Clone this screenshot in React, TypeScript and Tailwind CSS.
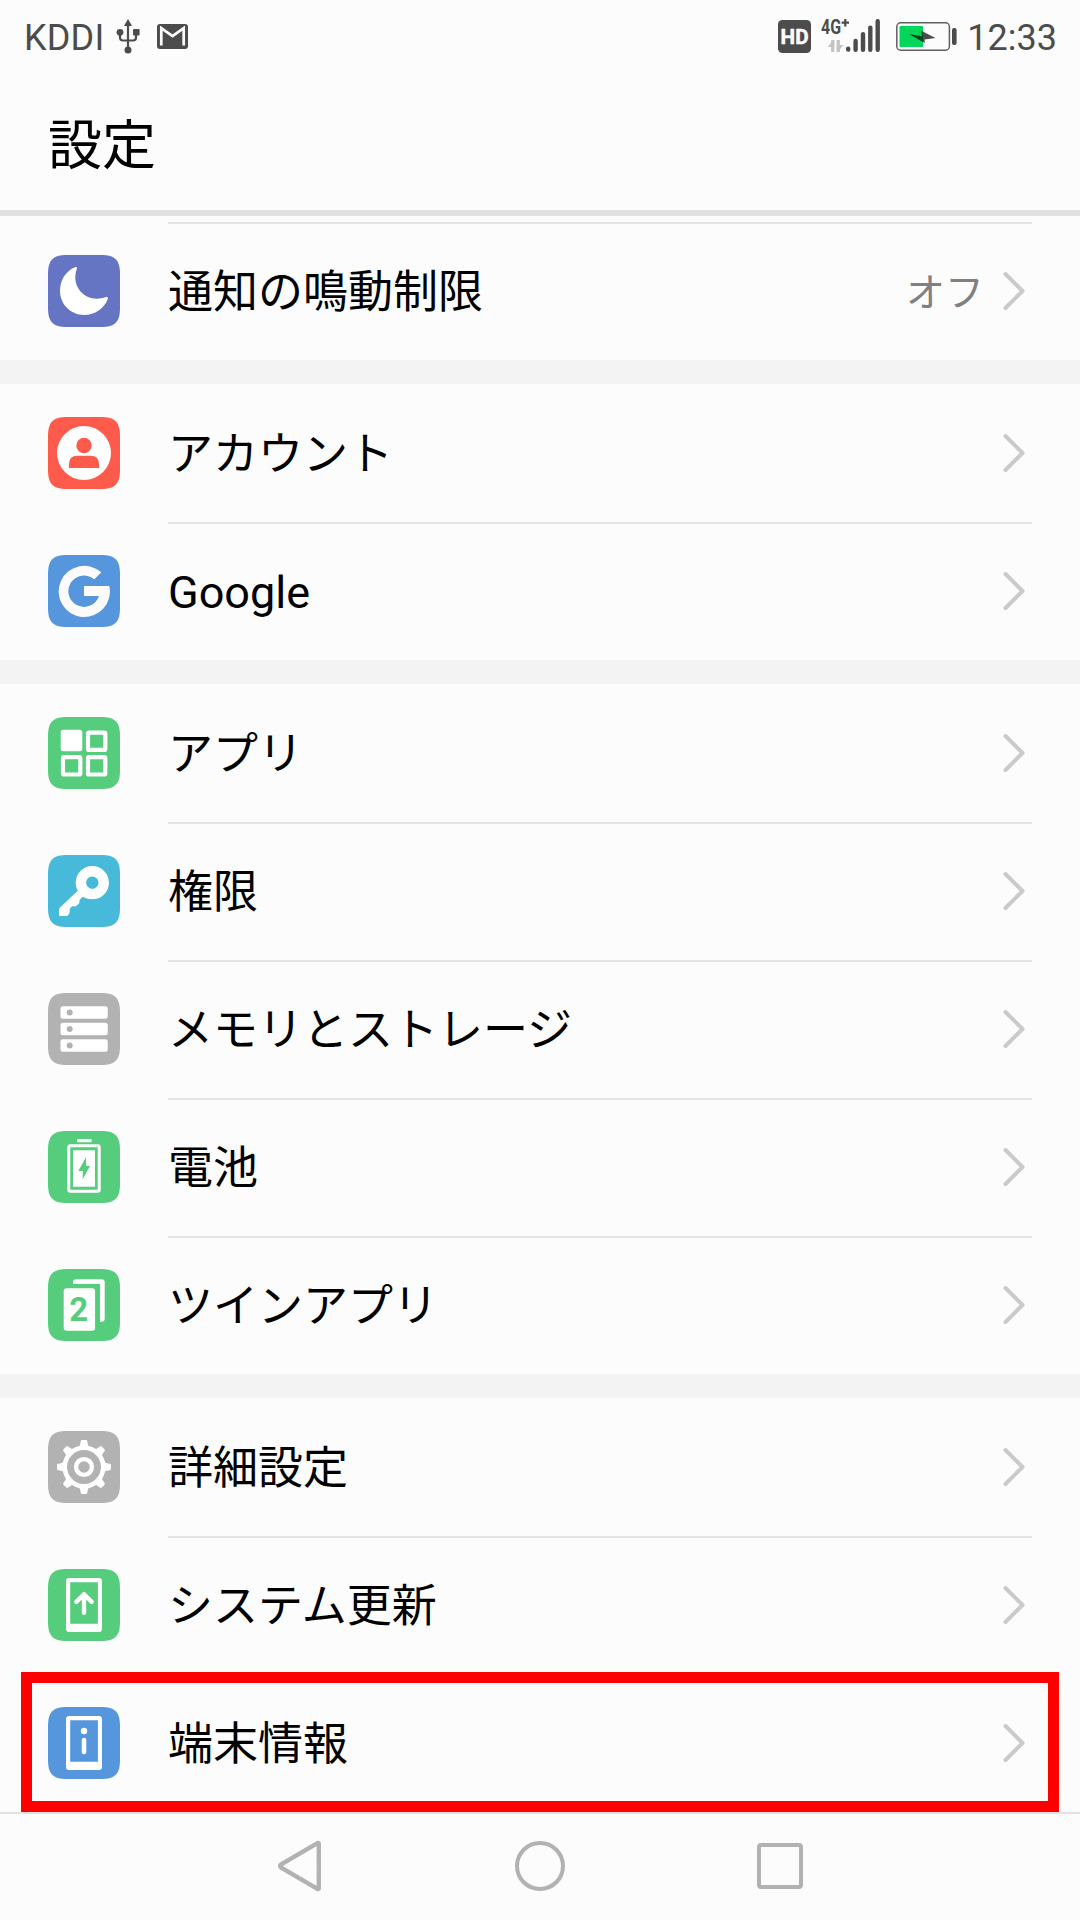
import type { ReactNode } from "react";

type Item = {
  label: string;
  color: string;
  icon: ReactNode;
  value?: string;
  highlighted?: boolean;
};

function MoonIcon() {
  return (
    <path
      fill="#fff"
      d="M27 12.3C28.5 11.7 29.4 12.5 28.8 13.9C27.8 16.5 27.3 19.5 27.3 22.5C27.3 34.2 36.8 43.7 48.5 43.7C51.8 43.7 55 43.2 58 42.1C59.5 41.6 60.4 42.5 59.8 44C56 53.5 47 60 36.2 60C22.8 60 12 49.2 12 36C12 25 18 15.8 27 12.3Z"
    />
  );
}

function AccountIcon() {
  return (
    <>
      <circle cx="36" cy="36" r="27" fill="#fff" />
      <circle cx="36" cy="28.5" r="7.7" fill="#ff5b4c" />
      <path d="M21 51V47Q21 38.7 29.3 38.7H42.7Q51 38.7 51 47V51Z" fill="#ff5b4c" />
    </>
  );
}

function GoogleIcon() {
  return (
    <path
      fill="#fdfbfe"
      d="M53.3 17.3A25.6 25.6 0 1 0 61.3 31H36V41H51A15.7 15.7 0 1 1 46.3 24.3Z"
    />
  );
}

function AppsIcon() {
  return (
    <g fill="none" stroke="#fff" strokeWidth="4.2">
      <rect x="12.7" y="12.7" width="21.6" height="21.6" rx="2.5" fill="#fff" stroke="none" />
      <rect x="40" y="15.6" width="17.3" height="17.3" rx="1" />
      <rect x="15" y="40.2" width="17.3" height="17.3" rx="1" />
      <rect x="40" y="40.2" width="17.3" height="17.3" rx="1" />
    </g>
  );
}

function KeyIcon() {
  return (
    <>
      <circle cx="44.3" cy="27.7" r="11.4" fill="none" stroke="#fff" strokeWidth="10.4" />
      <path
        fill="#fff"
        d="M30.6 35L12 52.4Q11 53.4 11 54.8V59.5Q11 61 12.5 61H18.5Q19.7 61 20.3 60L21.2 58.5Q21.7 57.7 21.7 56.5V54.5Q21.7 53.3 22.7 52.5L23.8 51.6Q24.8 50.8 26 51.2Q27.5 51.8 28.7 50.6L30.6 49Q31.7 48 31.4 46.6Q31.2 45.4 32 44.6L37.5 39Z"
      />
    </>
  );
}

function StorageIcon() {
  return (
    <>
      {[13.3, 29.8, 46.3].map((y) => (
        <g key={y}>
          <rect x="12.5" y={y} width="47.2" height="12.4" rx="2.5" fill="#fff" />
          <circle cx="21.7" cy={y + 6.2} r="3" fill="#b2b2b2" />
        </g>
      ))}
    </>
  );
}

function BatteryIcon() {
  return (
    <>
      <rect x="29" y="8" width="14.7" height="3.3" rx="1.2" fill="#fff" />
      <rect x="20.8" y="14.8" width="30.4" height="45.4" rx="1.5" fill="none" stroke="#fff" strokeWidth="3" />
      <rect x="25" y="19.3" width="22" height="36.4" fill="#fff" />
      <path d="M38 26.3L30.3 40H35L34.5 48.5L42 35H38Z" fill="#55cd7c" />
    </>
  );
}

function TwinIcon() {
  return (
    <>
      <path
        fill="#fff"
        d="M25 15V13.3Q25 10.2 28 10.2H53.7Q56.7 10.2 56.7 13.3V49.5Q56.7 52.7 53.5 52.7H52V15Z"
      />
      <rect x="15.7" y="19.3" width="31.4" height="42.4" rx="3" fill="#fff" />
      <text
        x="30.7"
        y="52"
        textAnchor="middle"
        fill="#55cd7c"
        className="font-['Roboto',sans-serif] text-[33px] font-bold"
      >
        2
      </text>
    </>
  );
}

function GearIcon() {
  return (
    <>
      <circle cx="36" cy="36" r="19.2" fill="none" stroke="#fff" strokeWidth="4.6" />
      <circle cx="36" cy="36" r="7.9" fill="none" stroke="#fff" strokeWidth="4.4" />
      {[0, 45, 90, 135, 180, 225, 270, 315].map((angle) => (
        <path
          key={angle}
          fill="#fff"
          transform={`rotate(${angle} 36 36)`}
          d="M32.7 10.2Q33 9 34 9H38Q39 9 39.3 10.2L40 14.2Q40.3 15.3 42 15.8V17.5H30V15.8Q31.7 15.3 32 14.2Z"
        />
      ))}
    </>
  );
}

function PhoneOutline() {
  return (
    <path
      fill="#fff"
      fillRule="evenodd"
      d="M21 9H51Q54 9 54 12V60Q54 63 51 63H21Q18 63 18 60V12Q18 9 21 9ZM22.2 13.2V54.8H49.9V13.2Z"
    />
  );
}

function UpdateIcon() {
  return (
    <>
      <PhoneOutline />
      <path
        d="M36 25.2V43.8M28.3 32.9L36 25.2L43.7 32.9"
        fill="none"
        stroke="#fff"
        strokeWidth="4.4"
        strokeLinecap="round"
        strokeLinejoin="round"
      />
    </>
  );
}

function InfoIcon() {
  return (
    <>
      <PhoneOutline />
      <circle cx="36" cy="24" r="3.2" fill="#fff" />
      <rect x="33.7" y="30.7" width="4.6" height="16.6" rx="2.3" fill="#fff" />
    </>
  );
}

const sections: Item[][] = [
  [{ label: "通知の鳴動制限", color: "#6674c4", icon: <MoonIcon />, value: "オフ" }],
  [
    { label: "アカウント", color: "#ff5b4c", icon: <AccountIcon /> },
    { label: "Google", color: "#5696dc", icon: <GoogleIcon /> },
  ],
  [
    { label: "アプリ", color: "#55cd7c", icon: <AppsIcon /> },
    { label: "権限", color: "#48bad9", icon: <KeyIcon /> },
    { label: "メモリとストレージ", color: "#b2b2b2", icon: <StorageIcon /> },
    { label: "電池", color: "#55cd7c", icon: <BatteryIcon /> },
    { label: "ツインアプリ", color: "#55cd7c", icon: <TwinIcon /> },
  ],
  [
    { label: "詳細設定", color: "#b2b2b2", icon: <GearIcon /> },
    { label: "システム更新", color: "#55cd7c", icon: <UpdateIcon /> },
    { label: "端末情報", color: "#5696dc", icon: <InfoIcon />, highlighted: true },
  ],
];

function StatusBar() {
  return (
    <div className="flex h-[72px] items-center pl-6 pr-[23px] text-[36px] leading-none text-[#4c4c4c]">
      <span className="pt-1 tracking-[0.2px]">KDDI</span>
      <svg className="ml-3 h-9 w-6" viewBox="0 0 24 36" fill="#4c4c4c">
        <path d="M12 1L16 8H8Z" />
        <path d="M12 6V32M4 14V19.5Q4 22.5 7 22.5H17Q20 22.5 20 19.5V13" fill="none" stroke="#4c4c4c" strokeWidth="2.2" />
        <circle cx="12" cy="32" r="3.5" />
        <circle cx="4" cy="14.3" r="3.4" />
        <rect x="17" y="11" width="6.6" height="6.6" rx="1" />
      </svg>
      <svg className="ml-[17px] h-[25px] w-[31px]" viewBox="0 0 31 25">
        <rect width="31" height="25" rx="3" fill="#4c4c4c" />
        <path d="M4.3 21.5V4.2L15.5 12.2L26.7 4.2V21.5" fill="none" stroke="#fcfcfc" strokeWidth="2.7" />
      </svg>

      <div className="ml-auto flex items-center">
        <svg className="h-[33px] w-[33px]" viewBox="0 0 33 33">
          <rect width="33" height="33" rx="4.5" fill="#4c4c4c" />
          <text
            x="2.6"
            y="24.2"
            textLength="28"
            lengthAdjust="spacingAndGlyphs"
            fill="#fcfcfc"
            stroke="#fcfcfc"
            strokeWidth="0.5"
            className="font-['Roboto',sans-serif] text-[21px] font-bold"
          >
            HD
          </text>
        </svg>
        <svg className="ml-[10px] h-[46px] w-[60px]" viewBox="0 -5 60 46">
          <text
            x="0"
            y="16"
            textLength="20"
            lengthAdjust="spacingAndGlyphs"
            fill="#4c4c4c"
            className="font-['Roboto',sans-serif] text-[20.5px] font-bold"
          >
            4G
          </text>
          <path d="M24.3 1V8.4M20.6 4.7H28" stroke="#4c4c4c" strokeWidth="2.2" />
          <path d="M11.7 22V34M17.3 22V34" stroke="#c4c4c4" strokeWidth="3.2" />
          <path d="M13.3 22H12L6.8 29H13.3ZM15.7 34H17L22.3 27H15.7Z" fill="#c4c4c4" />
          <path
            d="M27.2 30.6V31.6M34.6 23V31.8M42 16.2V31.8M49.3 9.6V31.8M56.7 3.2V31.8"
            stroke="#4c4c4c"
            strokeWidth="4.4"
            strokeLinecap="round"
          />
        </svg>
        <svg className="ml-[15px] h-[29px] w-[61px]" viewBox="0 0 61 29">
          <rect x="0.8" y="0.8" width="52.6" height="27.4" rx="4" fill="none" stroke="#606060" strokeWidth="1.5" />
          <rect x="3.5" y="4" width="23.5" height="21" rx="1" fill="#00d75a" />
          <path d="M13.5 12.3L26 14.2L25.3 8.8L39.5 16L28.5 17.5L29 21Z" fill="#4c4c4c" />
          <path d="M13.5 12.3L26 14.2L25.3 8.8L27 9.7V20.1Z" fill="#004a20" />
          <rect x="56" y="6" width="4.6" height="17" rx="2" fill="#4c4c4c" />
        </svg>
        <span className="ml-[10px] pt-1">12:33</span>
      </div>
    </div>
  );
}

function Row({ item, divider }: { item: Item; divider: boolean }) {
  return (
    <div className="relative flex h-[138px] items-center px-12">
      <svg className="h-[72px] w-[72px] shrink-0" viewBox="0 0 72 72">
        <path
          d="M0 19C0 5 5 0 19 0H53C67 0 72 5 72 19V53C72 67 67 72 53 72H19C5 72 0 67 0 53Z"
          fill={item.color}
        />
        {item.icon}
      </svg>
      <div
        className={`ml-12 flex h-full flex-1 items-center justify-between pr-[7px] ${divider ? "shadow-[inset_0_2px_0_#e5e5e5]" : ""}`}
      >
        <span className="pt-0.5 text-[45px] leading-none text-black">{item.label}</span>
        <div className="flex items-center">
          {item.value && (
            <span className="mr-[17px] pt-1 text-[39px] leading-none text-[#808080]">{item.value}</span>
          )}
          <svg className="h-10 w-6" viewBox="0 0 24 40">
            <path
              d="M4.5 3L21.5 20L4.5 37"
              fill="none"
              stroke="#cacaca"
              strokeWidth="4"
              strokeLinecap="round"
              strokeLinejoin="round"
            />
          </svg>
        </div>
      </div>
      {item.highlighted && (
        <div className="absolute -top-0.5 bottom-0 left-[21px] right-[21px] border-[11px] border-[#ff0000]" />
      )}
    </div>
  );
}

function NavBar() {
  return (
    <nav className="flex flex-1 justify-center border-t-2 border-[#e2e2e2] pb-0.5">
      <div className="flex w-60 items-center justify-center">
        <svg className="h-[52px] w-[52px]" viewBox="0 0 52 52" fill="none" stroke="#b2b2b2" strokeWidth="4.4">
          <path d="M44.8 3.8V48.2Q44.8 49.8 43 48.6L7.2 27.6Q5 26 7.2 24.4L43 3.4Q44.8 2.2 44.8 3.8Z" />
        </svg>
      </div>
      <div className="flex w-60 items-center justify-center">
        <div className="h-[50px] w-[50px] rounded-full border-4 border-[#b2b2b2]" />
      </div>
      <div className="flex w-60 items-center justify-center">
        <div className="h-[46px] w-[46px] rounded-[4px] border-4 border-[#b2b2b2]" />
      </div>
    </nav>
  );
}

export default function App() {
  return (
    <div className="flex h-[1920px] w-[1080px] flex-col overflow-hidden bg-[#fcfcfc] font-['Roboto','Noto_Sans_CJK_JP',sans-serif]">
      <StatusBar />
      <header className="flex h-36 items-center border-b-6 border-[#e0e0e0] px-12 pt-3">
        <h1 className="text-[54px] leading-none text-black">設定</h1>
      </header>

      {/* Settings list */}
      <main className="pt-1.5">
        {sections.map((items, index) => (
          <section key={index} className={index > 0 ? "border-t-24 border-[#f3f3f3]" : ""}>
            {items.map((item, i) => (
              <Row key={item.label} item={item} divider={index === 0 || i > 0} />
            ))}
          </section>
        ))}
      </main>

      <NavBar />
    </div>
  );
}
